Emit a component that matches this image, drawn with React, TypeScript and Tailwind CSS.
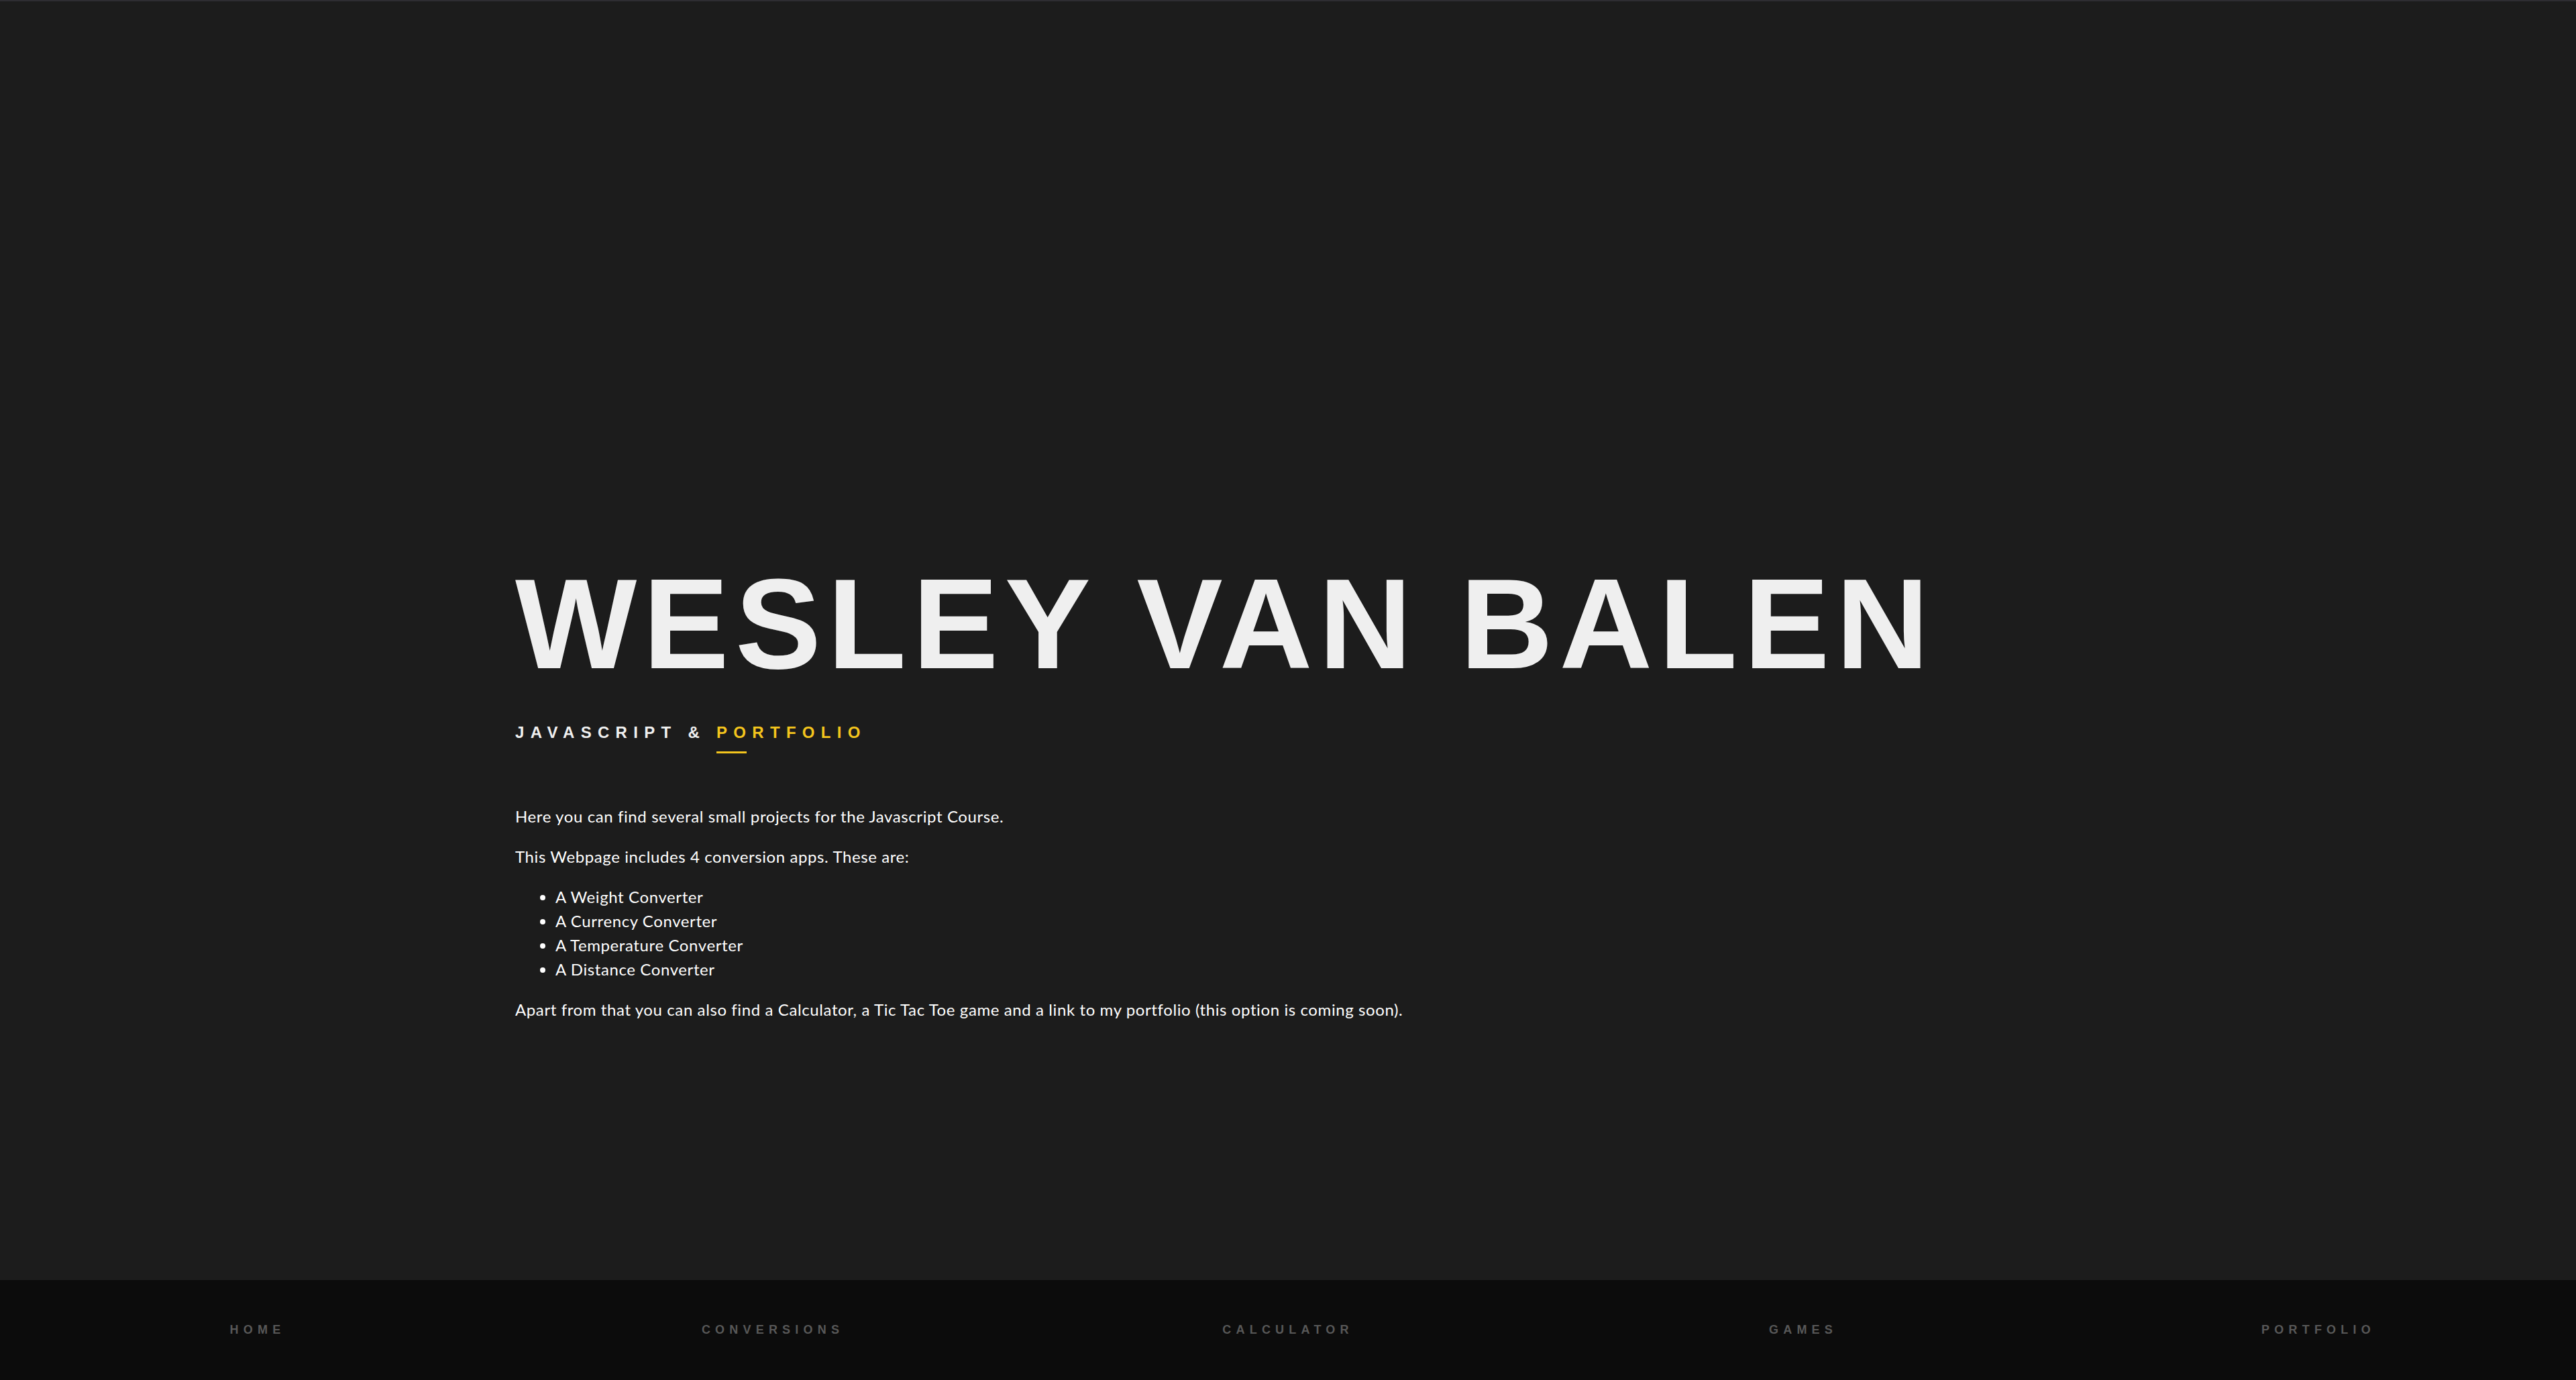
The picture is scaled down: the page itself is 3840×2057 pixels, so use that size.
const navItems = ["Home", "Conversions", "Calculator", "Games", "Portfolio"];

const converters = [
  "A Weight Converter",
  "A Currency Converter",
  "A Temperature Converter",
  "A Distance Converter",
];

export default function App() {
  return (
    <div className="min-h-screen flex flex-col bg-[#1c1c1c] border-t-2 border-[#2e2d32]">
      <main className="flex-1 pl-[768px] pt-[832px]">
        <h1 className="font-['Liberation_Sans',Arial,sans-serif] font-bold text-[192px] leading-none tracking-[9.4px] text-[#efefef] uppercase">
          Wesley van Balen
        </h1>

        <h2 className="mt-[54px] font-['Liberation_Sans',Arial,sans-serif] font-bold text-[24px] leading-none tracking-[9.3px] text-[#f0f0f0] uppercase">
          Javascript &amp;{" "}
          <span className="relative text-[#f4c51d]">
            Portfolio
            <span className="absolute left-0 top-[42px] h-[3px] w-[45px] bg-[#f4c51d]"></span>
          </span>
        </h2>

        <div className="mt-[95px] font-['Lato',sans-serif] text-[24px] leading-[36px] tracking-[0.6px] text-white">
          <p className="mb-6">Here you can find several small projects for the Javascript Course.</p>
          <p className="mb-6">This Webpage includes 4 conversion apps. These are:</p>
          <ul className="mb-6 list-disc pl-[60px]">
            {converters.map((c) => (
              <li key={c}>{c}</li>
            ))}
          </ul>
          <p>
            Apart from that you can also find a Calculator, a Tic Tac Toe game and a link to my portfolio (this
            option is coming soon).
          </p>
        </div>
      </main>

      <footer className="h-[149px] flex items-center bg-[#0c0c0c]">
        {navItems.map((item) => (
          <a
            key={item}
            href="#"
            className="flex-1 text-center font-['Liberation_Sans',Arial,sans-serif] font-bold text-[18px] tracking-[0.4em] uppercase text-[#585858]"
          >
            {item}
          </a>
        ))}
      </footer>
    </div>
  );
}
